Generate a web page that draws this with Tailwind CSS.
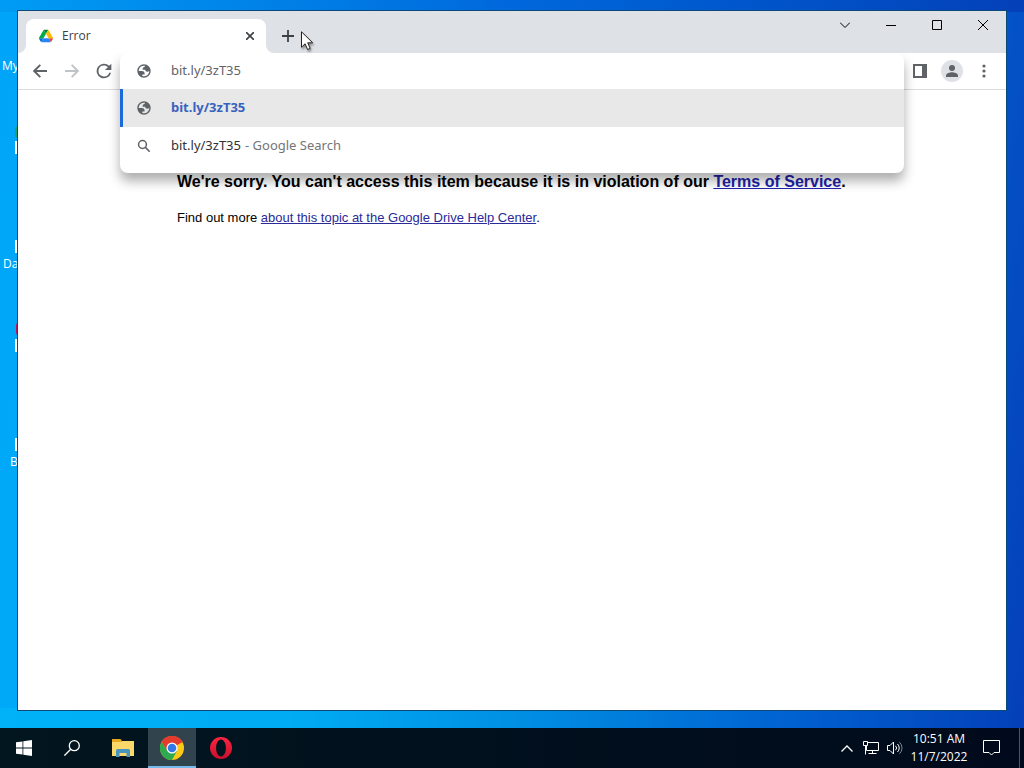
<!DOCTYPE html>
<html lang="en">
<head>
<meta charset="utf-8">
<meta name="viewport" content="width=device-width, initial-scale=1">
<title>Desktop</title>
<script src="https://cdn.jsdelivr.net/npm/@tailwindcss/browser@4"></script>
</head>
<body class="flex h-screen flex-col overflow-hidden font-['Open_Sans','Noto_Sans',sans-serif] text-[12px] text-[#3c4043]">
<svg class="hidden" aria-hidden="true">
  <symbol id="globe" viewBox="0 0 24 24"><path fill="#5f6368" fill-rule="evenodd" d="M12 2C6.480 2 2 6.480 2 12s4.480 10 10 10 10-4.480 10-10S17.520 2 12 2zM4 12h4.400c3.407.022 4.922 1.730 4.543 5.127H9.488v2.470a8.004 8.004 0 0 0 10.498-8.083C19.327 12.504 18.332 13 17 13c-2.137 0-3.210-.916-3.210-2.750h-3.748c-.274-2.728.683-4.092 2.870-4.092 0-.975.327-1.597.811-1.970A8.004 8.004 0 0 0 4 12z"/></symbol>
</svg>

<main class="relative min-h-0 flex-1 overflow-hidden bg-linear-[100deg,#00a4f8_0%,#00b0f8_25%,#0466d8_75%,#0440b8_100%]">
  <div class="absolute inset-x-0 top-0 h-3 bg-linear-to-r from-[#009cf4] via-[#0068dc] to-[#0440b8]"></div>
  <div class="absolute inset-x-0 bottom-0 h-5 bg-linear-[90deg,#00b2f8_0%,#00acf4_28%,#0090e4_50%,#0060d0_78%,#0440b8_100%]"></div>

  <!-- Desktop shortcuts, partly behind the browser window -->
  <div class="absolute left-[2px] top-[57px] text-white">My</div>
  <div class="absolute left-[15px] top-[126px] h-3 w-2 rounded-full bg-[#22a06a]"></div>
  <div class="absolute left-[15px] top-[141px] size-[13px] bg-white"></div>
  <div class="absolute left-[15px] top-[240px] size-[13px] bg-white"></div>
  <div class="absolute left-[3px] top-[255px] text-white">Data</div>
  <div class="absolute left-[16px] top-[322px] h-[14px] w-2 rounded-full bg-[#b01860]"></div>
  <div class="absolute left-[15px] top-[339px] size-[13px] bg-white"></div>
  <div class="absolute left-[15px] top-[438px] size-[13px] bg-white"></div>
  <div class="absolute left-[10px] top-[453px] text-white">B</div>

  <section aria-label="Browser window" class="absolute bottom-[17px] left-[17px] right-[17px] top-[10px] flex flex-col border border-[#0b4a78] bg-white">
    <header class="flex h-[42px] shrink-0 items-end bg-[#dee1e6] pl-2">
      <div class="relative flex h-[34px] w-60 items-center rounded-t-lg bg-white pl-3 pr-2">
        <svg class="absolute -left-2 bottom-0 size-2" viewBox="0 0 8 8" aria-hidden="true"><path d="M8 0v8H0a8 8 0 0 0 8-8z" fill="#fff"/></svg>
        <svg class="absolute -right-2 bottom-0 size-2" viewBox="0 0 8 8" aria-hidden="true"><path d="M0 0v8h8a8 8 0 0 1-8-8z" fill="#fff"/></svg>
        <svg class="h-4 w-4 p-px" viewBox="0 0 87.3 78" aria-hidden="true">
          <path d="m6.600 66.850 3.850 6.650c.8 1.400 1.950 2.500 3.300 3.300L27.500 53H0c0 1.550.4 3.100 1.200 4.500z" fill="#0066da"/>
          <path d="M43.650 25 29.900 1.200c-1.350.8-2.500 1.900-3.300 3.300L1.200 48.500A9 9 0 0 0 0 53h27.500z" fill="#00ac47"/>
          <path d="M73.550 76.800c1.350-.8 2.500-1.900 3.300-3.300l1.600-2.750L86.100 57.500c.8-1.400 1.200-2.950 1.200-4.500H59.800l5.850 11.500z" fill="#ea4335"/>
          <path d="M43.650 25 57.400 1.200C56.050.4 54.500 0 52.900 0H34.400c-1.600 0-3.150.45-4.500 1.200z" fill="#00832d"/>
          <path d="M59.800 53H27.500L13.750 76.800c1.350.8 2.900 1.200 4.500 1.200h50.800c1.600 0 3.150-.45 4.500-1.200z" fill="#2684fc"/>
          <path d="m73.400 26.500-12.700-22c-.8-1.400-1.950-2.500-3.300-3.300L43.650 25 59.800 53h27.450c0-1.550-.4-3.100-1.200-4.500z" fill="#ffba00"/>
        </svg>
        <span class="ml-2 flex-1">Error</span>
        <button type="button" aria-label="Close tab" class="grid size-4 place-items-center"><svg class="size-2" viewBox="0 0 8 8" stroke="#3c4043" stroke-width="1.600"><path d="m0 0 8 8M8 0 0 8"/></svg></button>
      </div>
      <button type="button" aria-label="New tab" class="ml-2 grid h-[34px] w-7 place-items-center"><svg class="size-3" viewBox="0 0 12 12" stroke="#3c4043" stroke-width="1.800"><path d="M6 0v12M0 6h12"/></svg></button>
      <div class="ml-auto flex h-7 self-start text-[#000]">
        <button type="button" aria-label="Search tabs" class="grid w-[46px] place-items-center"><svg class="size-[10px]" viewBox="0 0 10 10" fill="none" stroke="currentColor"><path d="m0 2.500 5 5 5-5"/></svg></button>
        <button type="button" aria-label="Minimize" class="grid w-[46px] place-items-center"><svg class="size-[10px]" viewBox="0 0 10 10" stroke="currentColor"><path d="M0 5.500h10"/></svg></button>
        <button type="button" aria-label="Maximize" class="grid w-[46px] place-items-center"><svg class="size-[10px]" viewBox="0 0 10 10" fill="none" stroke="#000"><path d="M.5.5h9v9h-9z"/></svg></button>
        <button type="button" aria-label="Close" class="grid w-[46px] place-items-center"><svg class="size-[10px]" viewBox="0 0 10 10" stroke="currentColor"><path d="m0 0 10 10M10 0 0 10"/></svg></button>
      </div>
    </header>

    <nav aria-label="Toolbar" class="flex h-[37px] shrink-0 border-b border-[#dadce0] bg-white px-[6px]">
      <button type="button" aria-label="Back" class="grid w-8 place-items-center"><svg class="size-[14px]" viewBox="0 0 14 14" fill="none" stroke="#5f6368" stroke-width="1.900"><path d="M14 7H1.500M7.300.8 1.200 7l6.100 6.200"/></svg></button>
      <button type="button" aria-label="Forward" class="grid w-8 place-items-center"><svg class="size-[14px]" viewBox="0 0 14 14" fill="none" stroke="#c0c3c7" stroke-width="1.900"><path d="M0 7h12.500M6.700.8 12.800 7l-6.100 6.200"/></svg></button>
      <button type="button" aria-label="Reload" class="grid w-8 place-items-center"><svg class="size-[22px]" viewBox="0 0 24 24" fill="#5f6368"><path d="M17.650 6.350A8 8 0 1 0 19.730 14h-2.080A6 6 0 1 1 12 6c1.660 0 3.140.69 4.220 1.780L13 11h7V4z"/></svg></button>

      <div class="relative min-w-0 flex-1 font-['Noto_Sans',sans-serif] text-[13px]">
        <div class="absolute inset-x-0 top-0 z-10 rounded-lg bg-white pb-2 shadow-[0_8px_12px_rgba(0,0,0,0.32)] [clip-path:inset(0_-24px_-24px_-24px)]">
          <label class="flex h-9 items-center">
            <svg class="ml-4 size-4"><use href="#globe"/></svg>
            <input type="text" aria-label="Address and search bar" value="bit.ly/3zT35" class="ml-[19px] min-w-0 flex-1 bg-transparent text-[#5f6368] outline-none">
          </label>
          <ul>
            <li><button type="button" class="flex h-[38px] w-full items-center border-l-3 border-[#1a6ad8] bg-[#e8e8e8] text-left font-bold text-[#3862c0]"><svg class="ml-[13px] size-4"><use href="#globe"/></svg><span class="ml-[19px]">bit.ly/3zT35</span></button></li>
            <li><button type="button" class="flex h-[38px] w-full items-center text-left"><svg class="ml-4 size-4" viewBox="0 0 16 16" fill="none" stroke="#5f6368" stroke-width="1.500"><circle cx="6.500" cy="6.500" r="3.900"/><path d="m9.400 9.400 4.300 4.300"/></svg><span class="ml-[19px] text-[#303134]">bit.ly/3zT35</span><span class="ml-1 text-[#757575]">- Google Search</span></button></li>
          </ul>
        </div>
      </div>

      <button type="button" aria-label="Side panel" class="grid w-8 place-items-center"><svg class="size-[14px]" viewBox="0 0 14 14"><path d="M0 0h14v14H0zM2 2v10h7V2z" fill="#5f6368" fill-rule="evenodd"/></svg></button>
      <button type="button" aria-label="Profile" class="grid w-8 place-items-center"><svg class="size-[22px]" viewBox="0 0 22 22"><circle cx="11" cy="11" r="11" fill="#dee1e6"/><g fill="#5f6368"><circle cx="11" cy="8" r="3"/><path d="M5 17v-1.600c0-2 4-3.200 6-3.200s6 1.200 6 3.200V17z"/></g></svg></button>
      <button type="button" aria-label="Menu" class="grid w-8 place-items-center"><svg class="h-[14px] w-1" viewBox="0 0 4 14" fill="#5f6368"><circle cx="2" cy="2" r="1.600"/><circle cx="2" cy="7" r="1.600"/><circle cx="2" cy="12" r="1.600"/></svg></button>
    </nav>

    <article class="px-[159px] pt-[82px] font-['Liberation_Sans',sans-serif] text-[13px] text-black">
      <h1 class="whitespace-nowrap text-[16px] font-bold leading-5">We're sorry. You can't access this item because it is in violation of our <a href="#" class="text-[#2222a8] underline">Terms of Service</a>.</h1>
      <p class="mt-4 whitespace-nowrap leading-5">Find out more <a href="#" class="text-[#2a2a98] underline">about this topic at the Google Drive Help Center</a>.</p>
    </article>
  </section>

  <svg class="absolute left-[301px] top-[31px] z-20 h-5 w-[14px] drop-shadow-[1px_2px_1px_rgba(0,0,0,0.4)]" viewBox="0 0 14 20" aria-hidden="true"><path d="M.5.8v15.400l3.600-3.400 2.500 5.700 2.600-1.100-2.500-5.600h5z" fill="#fff" stroke="#222"/></svg>
</main>

<footer class="flex h-10 shrink-0 bg-linear-to-r from-[#02161f] to-[#010a1c] text-white">
  <button type="button" aria-label="Start" class="grid w-12 place-items-center"><svg class="size-4" viewBox="0 0 16 16" fill="#fff"><path d="M0 2.300 6.500 1.400v6.200H0zM7.300 1.300 16 0v7.600H7.300zM0 8.400h6.500v6.200L0 13.700zM7.300 8.400H16V16l-8.700-1.300z"/></svg></button>
  <button type="button" aria-label="Search" class="grid w-12 place-items-center"><svg class="size-4" viewBox="0 0 16 16" fill="none" stroke="#fff" stroke-width="1.300"><circle cx="10.300" cy="5.700" r="5"/><path d="M6.700 9.300.4 15.600"/></svg></button>
  <div class="ml-[3px] flex gap-px">
    <button type="button" aria-label="File Explorer" class="grid w-12 place-items-center"><svg class="h-[18px] w-[22px]" viewBox="0 0 22 18"><path d="M0 0h8.500l1.500 2h12v15H0z" fill="#e8a820"/><path d="M0 3h9l2-1h11v15H0z" fill="#fbd869"/><path d="M4 18v-6.500a1.500 1.500 0 0 1 1.500-1.500h11a1.500 1.500 0 0 1 1.500 1.500V18h-3.500v-4h-7v4z" fill="#4a94c0"/></svg></button>
    <button type="button" aria-label="Google Chrome" class="grid w-12 place-items-center border-b-2 border-[#76b9ed] bg-[#31444e] pt-[2px]"><svg class="size-6" viewBox="0 0 24 24"><circle cx="12" cy="12" r="12" fill="#fbc916"/><path d="M12 12 1.600 6A12 12 0 0 1 22.400 6z" fill="#e33b2e"/><path d="M12 6.500h10.700A12 12 0 0 0 1.600 6l5.500 9z" fill="#e33b2e"/><path d="M1.600 6A12 12 0 0 0 12 24l5-9.200-5 2.700-4.800-2.700z" fill="#2da94f"/><circle cx="12" cy="12" r="5.500" fill="#fff"/><circle cx="12" cy="12" r="4.300" fill="#3079e8"/></svg></button>
    <button type="button" aria-label="Opera" class="grid w-12 place-items-center"><svg class="size-[22px]" viewBox="0 0 22 22"><defs><linearGradient id="op" x2="0" y2="1"><stop stop-color="#ff2440"/><stop offset="1" stop-color="#c8102c"/></linearGradient></defs><path d="M11 0a11 11 0 1 0 0 22 11 11 0 0 0 0-22zm0 2.600c2.900 0 4.900 3.700 4.900 8.400s-2 8.400-4.900 8.400S6.100 15.700 6.100 11 8.100 2.600 11 2.600z" fill="url(#op)" fill-rule="evenodd"/></svg></button>
  </div>

  <div class="ml-auto flex">
    <button type="button" aria-label="Show hidden icons" class="grid w-6 place-items-center"><svg class="h-[7px] w-3" viewBox="0 0 12 7" fill="none" stroke="#fff" stroke-width="1.300"><path d="m.5 6.500 5.500-5.500 5.500 5.500"/></svg></button>
    <button type="button" aria-label="Network" class="grid w-6 place-items-center"><svg class="h-[14px] w-4" viewBox="0 0 16 14" fill="none" stroke="#fff"><path d="M5 1.500h10.500v8H3.500V4.500M.5.500h4v4h-4zM2.500 4.500v9M9.500 9.500v3M5.500 12.500h8"/></svg></button>
    <button type="button" aria-label="Volume" class="grid w-6 place-items-center"><svg class="h-[14px] w-4" viewBox="0 0 16 14" fill="none" stroke="#fff"><path d="M.5 4.500h2.500l3.500-3.500v12L3 9.500H.5z"/><path d="M8.500 4.800a3 3 0 0 1 0 4.400M10.500 3a5.500 5.500 0 0 1 0 8"/><path d="M12.500 1.200a8 8 0 0 1 0 11.600" stroke="#7a858c"/></svg></button>
    <button type="button" class="w-16 text-center text-[12px] leading-[18px]"><time class="block">10:51 AM</time><time class="block">11/7/2022</time></button>
    <button type="button" aria-label="Notifications" class="grid w-10 place-items-center"><svg class="h-4 w-[17px]" viewBox="0 0 17 16" fill="none" stroke="#fff"><path d="M.5.500h16v12H11l-2.500 2.500L6 12.500H.5z"/></svg></button>
    <button type="button" aria-label="Show desktop" class="ml-2 w-[5px] border-l border-[#4c5560]"></button>
  </div>
</footer>
</body>
</html>
